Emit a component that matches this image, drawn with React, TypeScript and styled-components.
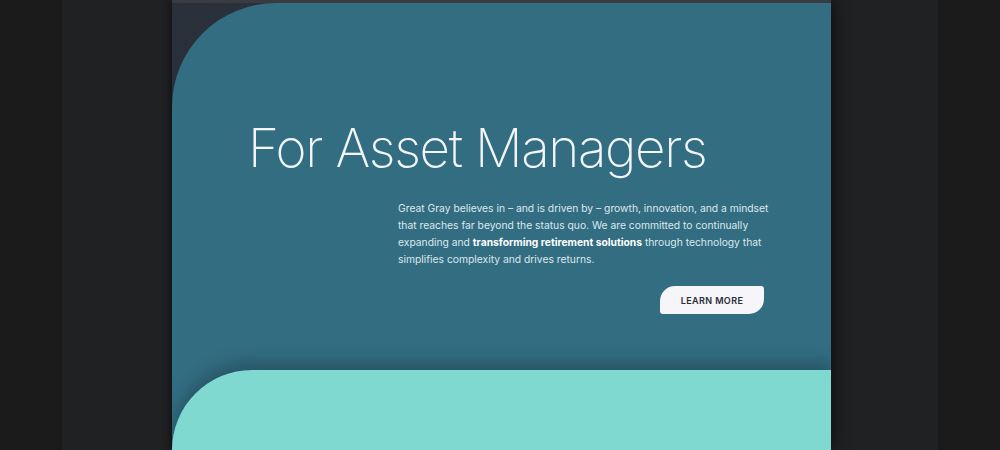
import React from "react";
import styled, { createGlobalStyle } from "styled-components";

const Global = createGlobalStyle`
  html, body { margin: 0; padding: 0; background: #1b1b1b; }
  body { font-family: "Inter", "Liberation Sans", sans-serif; overflow: hidden; }
`;

const Stage = styled.div`
  width: 1000px;
  height: 450px;
  display: flex;
  justify-content: center;
  background: #1b1b1b;
  overflow: hidden;
`;

const Column = styled.div`
  width: 876px;
  height: 450px;
  background: #202123;
  display: flex;
  padding-left: 110px;
  box-sizing: border-box;
`;

const Frame = styled.div`
  width: 659px;
  height: 450px;
  display: flex;
  flex-direction: column;
  background: linear-gradient(90deg, #2a3039 0%, #2f3741 100%);
  box-shadow: 6px 0 14px rgba(0, 0, 0, 0.35), -3px 0 6px rgba(0, 0, 0, 0.3);
`;

const TopStrip = styled.div`
  height: 3px;
  flex: none;
  background: #3a3a43;
`;

const Hero = styled.section`
  flex: 1;
  display: flex;
  flex-direction: column;
  background: #336d82;
  border-top-left-radius: 104px;
  overflow: hidden;
`;

const HeroBody = styled.div`
  height: 367px;
  flex: none;
  box-sizing: border-box;
  padding: 113px 0 0 76px;
  display: flex;
  flex-direction: column;
`;

const Title = styled.h1`
  margin: 0;
  font-family: "Inter", "Liberation Sans", sans-serif;
  font-weight: 200;
  font-size: 53px;
  line-height: 64px;
  letter-spacing: -1.4px;
  color: #f2f6f8;
`;

const Copy = styled.div`
  margin: 20px 0 0 150px;
  width: 386px;
  display: flex;
  flex-direction: column;
  align-items: flex-end;
`;

const Paragraph = styled.p`
  margin: 0;
  align-self: stretch;
  font-family: "Inter", "Liberation Sans", sans-serif;
  font-size: 10.3px;
  line-height: 17px;
  color: #dde8ec;
  font-weight: 400;

  strong {
    font-weight: 700;
    color: #ffffff;
  }
`;

const Button = styled.button`
  margin: 18px 20px 0 0;
  width: 104px;
  height: 28px;
  border: none;
  background: #f5f5fa;
  color: #2a2b36;
  font-family: "Inter", "Liberation Sans", sans-serif;
  font-weight: 600;
  font-size: 9px;
  letter-spacing: 0.4px;
  border-radius: 15px 3px 15px 3px;
  cursor: pointer;
`;

const Lower = styled.section`
  flex: 1;
  background: #80d9d0;
  border-top-left-radius: 104px;
  box-shadow: 0 -8px 16px rgba(20, 40, 50, 0.35);
`;

export default function App() {
  return (
    <>
      <Global />
      <Stage>
        <Column>
          <Frame>
            <TopStrip />
            <Hero>
              <HeroBody>
                <Title>For Asset Managers</Title>
                <Copy>
                  <Paragraph>
                    Great Gray believes in – and is driven by – growth, innovation, and a mindset
                    that reaches far beyond the status quo. We are committed to continually
                    expanding and <strong>transforming retirement solutions</strong> through
                    technology that simplifies complexity and drives returns.
                  </Paragraph>
                  <Button>LEARN MORE</Button>
                </Copy>
              </HeroBody>
              <Lower />
            </Hero>
          </Frame>
        </Column>
      </Stage>
    </>
  );
}
